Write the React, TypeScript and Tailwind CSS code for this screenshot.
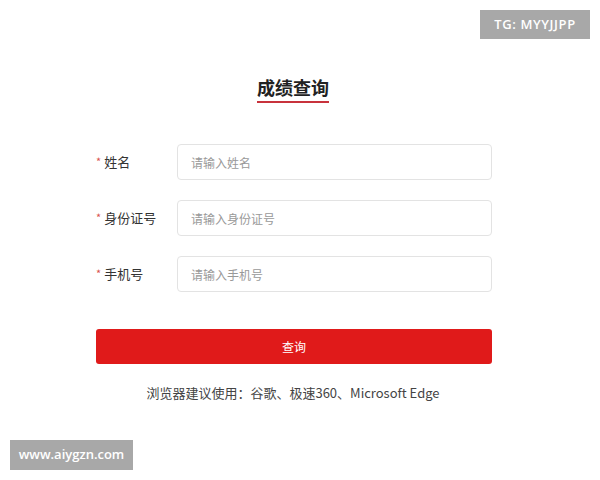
import React from 'react'

const fields = [
  { label: '姓名', placeholder: '请输入姓名' },
  { label: '身份证号', placeholder: '请输入身份证号' },
  { label: '手机号', placeholder: '请输入手机号' },
]

const font = { fontFamily: '"Noto Sans CJK SC", "Liberation Sans", sans-serif' }
const markFont = { fontFamily: '"Open Sans", sans-serif' }

export default function App() {
  return (
    <div
      className="relative w-[600px] h-[480px] bg-white overflow-hidden"
      style={font}
    >
      {/* 水印 */}
      <div
        className="absolute left-[480px] top-[10px] w-[110px] h-[29px] bg-[#a8a8a8] text-white text-[13px] font-semibold flex items-center justify-center tracking-[0.6px]"
        style={markFont}
      >
        TG: MYYJJPP
      </div>
      <div
        className="absolute left-[10px] top-[440px] w-[123px] h-[30px] bg-[#a8a8a8] text-white text-[13px] font-semibold flex items-center justify-center"
        style={markFont}
      >
        www.aiygzn.com
      </div>

      <div className="flex flex-col items-center pt-[74px] pr-[14px]">
        <h1 className="text-[18px] font-bold text-[#222] leading-[26px] border-b-2 border-[#c8323c] pb-[1px]">
          成绩查询
        </h1>
      </div>

      <div className="flex flex-col gap-[20px] mt-[41px] pl-[96px]">
        {fields.map((f) => (
          <div key={f.label} className="flex items-center">
            <div className="w-[81px] flex items-center text-[13px] text-[#333]">
              <span className="text-[#d9534f] text-[11px] mr-[3px] -mt-[2px]">*</span>
              {f.label}
            </div>
            <input
              placeholder={f.placeholder}
              className="w-[315px] h-[36px] border border-[#e3e3e3] rounded-[4px] px-[13px] text-[12px] placeholder:text-[#999] outline-none"
              style={font}
            />
          </div>
        ))}
      </div>

      <div className="pl-[96px] mt-[37px]">
        <button
          className="w-[396px] h-[35px] bg-[#e01a1a] rounded-[3px] text-white text-[12px]"
          style={font}
        >
          查询
        </button>
      </div>

      <p className="text-center text-[13px] text-[#444] mt-[19px] pr-[14px]">
        浏览器建议使用：谷歌、极速360、Microsoft Edge
      </p>
    </div>
  )
}
